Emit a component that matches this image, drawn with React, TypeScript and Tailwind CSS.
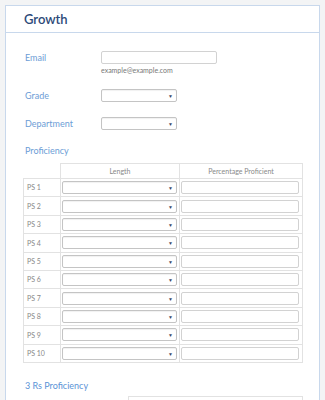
import React from "react";

const font = { fontFamily: "Lato, 'Noto Sans', 'Liberation Sans', sans-serif" };

function Select({ w }: { w: string }) {
  return (
    <div className={`relative ${w} h-[13px] rounded-[2px] border border-[#c4c4c4] bg-white shadow-[inset_0_1px_1px_rgba(0,0,0,0.06)]`}>
      <span className="absolute right-[3px] top-[1px] text-[5px] leading-[10px] text-[#3a4a66]">▼</span>
    </div>
  );
}

function Input({ w }: { w: string }) {
  return <div className={`${w} h-[13px] rounded-[2px] border border-[#d2d2d2] bg-white`} />;
}

const rows = ["PS 1", "PS 2", "PS 3", "PS 4", "PS 5", "PS 6", "PS 7", "PS 8", "PS 9", "PS 10"];

export default function App() {
  return (
    <div className="w-[325px] h-[400px] overflow-hidden bg-[#f3f4f5] px-[5px] pt-[5px]" style={font}>
      <div className="w-[315px] h-[420px] border border-[#c8d8ec] bg-white">
        <div className="h-[27px] border-b border-[#c8d8ec] pl-[18px] flex items-center">
          <span className="text-[13px] font-semibold text-[#2d4a78] leading-none">Growth</span>
        </div>
        <div className="pl-[19px] pt-[18px]">
          <div className="flex items-center">
            <div className="w-[76px] text-[9px] text-[#6d9dd6] leading-none">Email</div>
            <Input w="w-[116px]" />
          </div>
          <div className="ml-[76px] mt-[2px] text-[7px] leading-[9px] text-[#777]">example@example.com</div>
          <div className="flex items-center mt-[14px]">
            <div className="w-[76px] text-[9px] text-[#6d9dd6] leading-none">Grade</div>
            <Select w="w-[76px]" />
          </div>
          <div className="flex items-center mt-[15px]">
            <div className="w-[76px] text-[9px] text-[#6d9dd6] leading-none">Department</div>
            <Select w="w-[76px]" />
          </div>
          <div className="mt-[15px] text-[9px] leading-[12px] text-[#6d9dd6]">Proficiency</div>
        </div>
        <div className="ml-[17px] mt-[6px] w-[280px]">
          <div className="flex h-[15px]">
            <div className="w-[37px]" />
            <div className="w-[119px] border-l border-t border-[#e2e2e2] flex items-center justify-center text-[7px] text-[#888]">Length</div>
            <div className="w-[124px] border-l border-t border-r border-[#e2e2e2] flex items-center justify-center text-[7px] text-[#888]">Percentage Proficient</div>
          </div>
          <div className="border-b border-[#e2e2e2]">
            {rows.map((r) => (
              <div key={r} className="flex h-[18.4px]">
                <div className="w-[37px] border-l border-t border-[#e2e2e2] flex items-center pl-[3px] text-[7px] text-[#888]">{r}</div>
                <div className="w-[119px] border-l border-t border-[#e2e2e2] flex items-center pl-[1px]">
                  <Select w="w-[115px]" />
                </div>
                <div className="w-[124px] border-l border-t border-r border-[#e2e2e2] flex items-center pl-[1px]">
                  <Input w="w-[118px]" />
                </div>
              </div>
            ))}
          </div>
        </div>
        <div className="pl-[19px] mt-[17px] text-[9px] leading-[12px] text-[#5b93d6]">3 Rs Proficiency</div>
        <div className="ml-[122px] mt-[4px] w-[175px] h-[15px] border-l border-t border-r border-[#e2e2e2] flex items-start pt-[2px] justify-center text-[7px] leading-[8px] text-[#888]">Percentage Proficient</div>
      </div>
    </div>
  );
}
